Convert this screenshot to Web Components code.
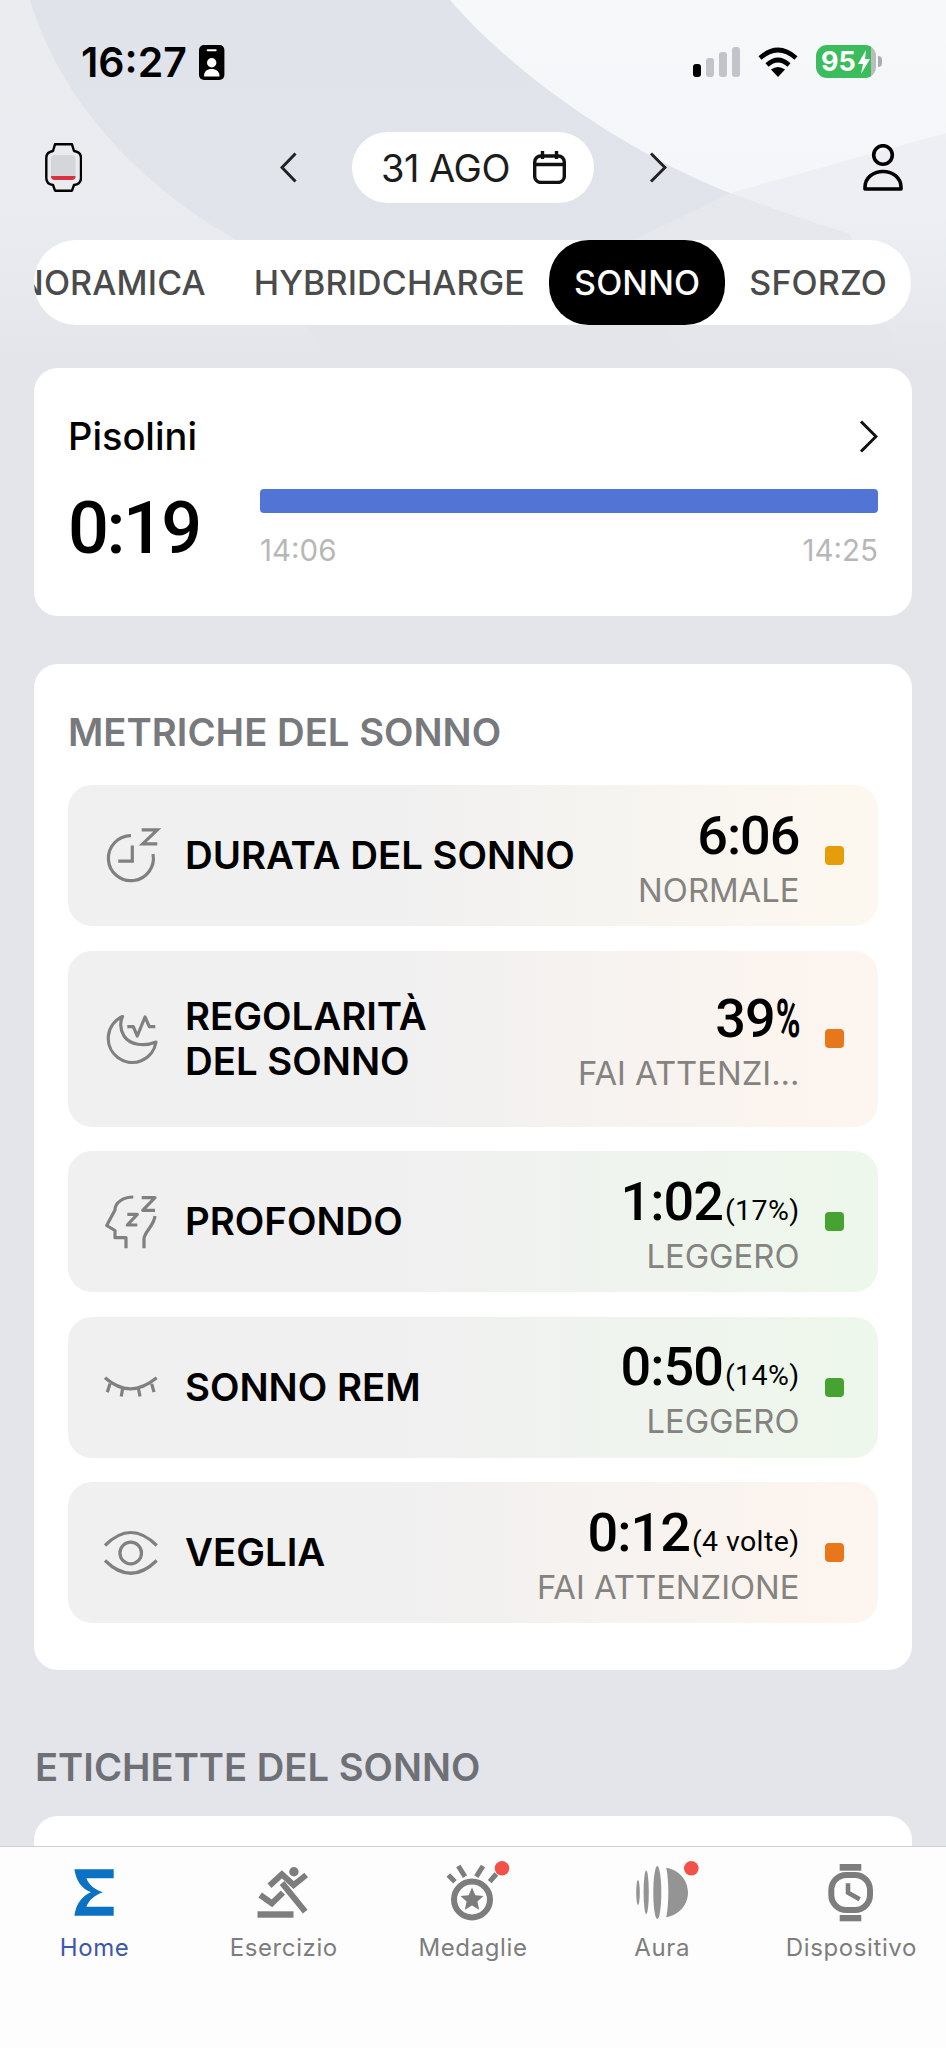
<!DOCTYPE html>
<html lang="it">
<head>
<meta charset="utf-8">
<title>Sonno</title>
<style>
  html, body { margin: 0; padding: 0; background: #e3e5ea; }
  body { font-family: Inter, "Liberation Sans", sans-serif; }
</style>
</head>
<body>
<app-shell>
  <status-bar></status-bar>
  <top-nav date="31 AGO"></top-nav>
  <tab-strip>
    <tab-item>PANORAMICA</tab-item>
    <tab-item>HYBRIDCHARGE</tab-item>
    <tab-item active>SONNO</tab-item>
    <tab-item>SFORZO</tab-item>
  </tab-strip>
  <nap-card title="Pisolini" total="0:19" start="14:06" end="14:25"></nap-card>
  <metrics-card heading="METRICHE DEL SONNO">
    <metric-row icon="clock" level="normal" value="6:06" note="NORMALE">DURATA DEL SONNO</metric-row>
    <metric-row icon="moon" level="warn" value="39%" note="FAI ATTENZI..." tall>REGOLARITÀ<br>DEL SONNO</metric-row>
    <metric-row icon="head" level="good" value="1:02" extra="(17%)" note="LEGGERO">PROFONDO</metric-row>
    <metric-row icon="lash" level="good" value="0:50" extra="(14%)" note="LEGGERO">SONNO REM</metric-row>
    <metric-row icon="eye" level="warn" value="0:12" extra="(4 volte)" note="FAI ATTENZIONE">VEGLIA</metric-row>
  </metrics-card>
  <section-title>ETICHETTE DEL SONNO</section-title>
  <blank-card></blank-card>
  <bottom-nav>
    <nav-item icon="sigma" active>Home</nav-item>
    <nav-item icon="runner">Esercizio</nav-item>
    <nav-item icon="medal">Medaglie</nav-item>
    <nav-item icon="aura">Aura</nav-item>
    <nav-item icon="watch">Dispositivo</nav-item>
  </bottom-nav>
</app-shell>

<script>
const ICONS = {
  clock: `<svg width="60" height="60" viewBox="0 0 60 60" fill="none" stroke="#808080" stroke-width="3.2">
    <path d="M31 9.7A22.5 22.5 0 1 0 53 28"/><path d="M32.3 19.5V35.2H18.3"/>
    <path d="M41.7 3.8H57.3L42.7 17.8H57.3"/></svg>`,
  moon: `<svg width="60" height="60" viewBox="0 0 60 60" fill="none" stroke="#808080" stroke-width="3.2" stroke-linejoin="round">
    <path d="M22.5 7.5A24 24 0 1 0 56 33C44 38 30 36 24 27C20 20 20 13 22.5 7.5Z"/>
    <path d="M27.3 17.7H33.3L37.3 27L45 8L49.3 17.7H55.3"/></svg>`,
  head: `<svg width="60" height="60" viewBox="0 0 60 60" fill="none" stroke="#808080" stroke-width="3.2" stroke-linejoin="round">
    <path d="M33.3 5C24 5 15 10 15 18L6.7 33.5L15 38.5V45.7H26V56.3"/>
    <path d="M55 24C54 34 44 40 44 47V56.3"/>
    <path d="M41.7 5.7H55L42.7 18.3H55"/><path d="M27.3 22.3H37.3L27.3 33H37.3"/></svg>`,
  lash: `<svg width="60" height="60" viewBox="0 0 60 60" fill="none" stroke="#808080" stroke-width="3.2">
    <path d="M5 20.8Q30 42.8 56.7 20.8"/>
    <path d="M10 26.8L7.3 35.2M22.7 30.8L21.3 39.5M38.3 30.8L40 39.5M51.7 26.8L54 35.2"/></svg>`,
  eye: `<svg width="60" height="60" viewBox="0 0 60 60" fill="none" stroke="#808080" stroke-width="3.2">
    <path d="M5 22.5Q30.8 -3.5 56.7 22.5"/><path d="M5 37.5Q30.8 63 56.7 37.5"/>
    <circle cx="30.7" cy="30" r="10.8"/></svg>`,
  sigma: `<svg width="70" height="60" viewBox="0 0 70 60">
    <path fill="#0a72c4" d="M14.4 5.3H53.7V14.3H26.4C29 21 35 26 43 28.3C35 31 29 36 26.4 42.7H53.7V51.7H14.4C16 40 22 32 31 28.3C22 25 16 17 14.4 5.3Z"/></svg>`,
  runner: `<svg width="70" height="60" viewBox="0 0 70 60" fill="none" stroke="#7d7d7d" stroke-width="6">
    <rect x="8.5" y="47.3" width="36" height="6.4" fill="#7d7d7d" stroke="none"/>
    <circle cx="44.9" cy="7.7" r="4.7" fill="#7d7d7d" stroke="none"/>
    <path d="M20.5 21.7L32.9 10.3L44.6 21L57.2 11"/>
    <path d="M33 19L56.2 47.7"/>
    <path d="M11.2 31L22.9 39.3L33.9 28.7"/></svg>`,
  medal: `<svg width="70" height="60" viewBox="0 0 70 60" fill="none" stroke="#7d7d7d" stroke-width="5">
    <circle cx="34" cy="35.5" r="18" stroke-width="6"/>
    <path d="M34 23.5L37.4 31.2L45.6 32L39.4 37.6L41.2 45.8L34 41.5L26.8 45.8L28.6 37.6L22.4 32L30.6 31.2Z" fill="#7d7d7d" stroke="none"/>
    <path d="M10.3 11L17 17.7M20.3 2L27 12.7M45 2L38.3 12.7M58.3 10L51.7 17.7"/>
    <circle cx="64" cy="4.3" r="7.3" fill="#f4504a" stroke="none"/></svg>`,
  aura: `<svg width="70" height="60" viewBox="0 0 70 60" fill="#949494">
    <ellipse cx="11" cy="28.5" rx="1.8" ry="12.5"/><ellipse cx="19.2" cy="28.3" rx="2.6" ry="21.7"/>
    <ellipse cx="30.3" cy="28.5" rx="4" ry="26.5"/>
    <path d="M39.3 3.7C52 6 61 16 61 28.5C61 41 52 51 39.3 53.3C42 40 42 17 39.3 3.7Z"/>
    <circle cx="64.3" cy="4.3" r="7.3" fill="#f4504a"/></svg>`,
  watch: `<svg width="70" height="60" viewBox="0 0 70 60" fill="none" stroke="#7d7d7d" stroke-width="6">
    <rect x="23.7" y="0" width="21.6" height="6.7" fill="#7d7d7d" stroke="none"/>
    <rect x="23.7" y="51" width="21.6" height="6.3" fill="#7d7d7d" stroke="none"/>
    <rect x="15.3" y="11" width="38.7" height="35" rx="15"/>
    <path d="M32 19.3V28.7L43.7 35.3" stroke-width="4.6"/></svg>`
};

class AppIcon extends HTMLElement {
  connectedCallback() {
    this.attachShadow({ mode: "open" }).innerHTML = `
      <style>
        :host { display: block; line-height: 0; flex: none; }
        svg { overflow: visible; }
      </style>
      ${ICONS[this.getAttribute("name")]}`;
  }
}

class AppShell extends HTMLElement {
  constructor() {
    super();
    this.attachShadow({ mode: "open" }).innerHTML = `
      <style>
        :host {
          display: block;
          position: relative;
          width: 946px;
          height: 2048px;
          overflow: hidden;
          background: #e3e5ea;
          color: #000;
          font-family: Inter, "Liberation Sans", sans-serif;
        }
        .backdrop { position: absolute; left: 0; top: 0; }
        .content { position: relative; height: 100%; }
      </style>
      <svg class="backdrop" width="946" height="360" viewBox="0 0 946 360">
        <defs>
          <linearGradient id="fade" x1="0" y1="0" x2="0" y2="1">
            <stop offset="0" stop-color="#e4e7ed" stop-opacity="0"/>
            <stop offset=".6" stop-color="#e4e7ed" stop-opacity=".15"/>
            <stop offset="1" stop-color="#e3e5ea"/>
          </linearGradient>
        </defs>
        <rect width="946" height="360" fill="#e0e3ea"/>
        <path d="M0 0H30C60 100 140 190 255 250L330 360H0Z" fill="#eaecf0"/>
        <path d="M450 0C510 70 620 150 730 193C790 215 860 240 946 270V0Z" fill="#f7f8fa"/>
        <path d="M730 193L946 133V360H900L850 234C805 219 765 206 730 193Z" fill="#eef0f4"/>
        <path d="M730 193L634 240L680 360H900L850 234C805 219 765 206 730 193Z" fill="#e6e8ec"/>
        <rect width="946" height="360" fill="url(#fade)"/>
      </svg>
      <div class="content"><slot></slot></div>`;
  }
}

class StatusBar extends HTMLElement {
  constructor() {
    super();
    this.attachShadow({ mode: "open" }).innerHTML = `
      <style>
        :host {
          display: flex;
          height: 126px;
          padding: 45px 64px 0 81px;
          box-sizing: border-box;
          justify-content: space-between;
          align-items: flex-start;
        }
        .left { display: flex; align-items: center; gap: 12px; height: 35px; }
        .time { font-size: 41px; font-weight: 600; line-height: 35px; }
        .right { display: flex; align-items: center; gap: 18px; height: 33px; }
        .battery {
          width: 60px; height: 33px; border-radius: 11px; box-sizing: border-box;
          background: linear-gradient(to right, #3bbd5e 92%, #b9bdc0 92%);
          color: #fff; font-size: 27px; font-weight: 700; line-height: 33px;
          display: flex; align-items: center; padding-left: 5px; gap: 1px;
        }
        .tip { width: 4px; height: 11px; background: #a9adb1; border-radius: 0 4px 4px 0; margin-left: 2px; }
        .bat-wrap { display: flex; align-items: center; }
      </style>
      <div class="left">
        <span class="time">16:27</span>
        <svg width="26" height="35" viewBox="0 0 26 35">
          <rect width="25.4" height="35" rx="5" fill="#000"/>
          <rect x="7.7" y="4.2" width="10" height="2" rx="1" fill="#fff"/>
          <circle cx="12.7" cy="17.7" r="4.7" fill="#fff"/>
          <path d="M5 31.5C5 26 8 24 12.7 24C17 24 20.5 26 20.5 31.5Z" fill="#fff"/>
        </svg>
      </div>
      <div class="right">
        <svg width="47" height="32" viewBox="0 0 47 32">
          <rect x="0" y="18" width="8" height="13" rx="3" fill="#000"/>
          <rect x="13" y="12" width="8" height="19" rx="3" fill="#c2c4ca"/>
          <rect x="26" y="6" width="8" height="25" rx="3" fill="#c2c4ca"/>
          <rect x="39" y="1" width="8" height="30" rx="3" fill="#c2c4ca"/>
        </svg>
        <svg width="40" height="30" viewBox="0 0 40 30" fill="none" stroke="#000" stroke-width="4.6">
          <path d="M2 11Q20 -5 38 11"/><path d="M9 18Q20 8 31 18"/>
          <path d="M13 22.5Q20 17.5 27 22.5L20 30Z" fill="#000" stroke="none"/>
        </svg>
        <div class="bat-wrap">
          <div class="battery">95<svg width="14" height="26" viewBox="0 0 14 26"><path d="M9 1L1 15H6L4 25L13 10H8Z" fill="#fff"/></svg></div>
          <div class="tip"></div>
        </div>
      </div>`;
  }
}

class TopNav extends HTMLElement {
  connectedCallback() {
    this.attachShadow({ mode: "open" }).innerHTML = `
      <style>
        :host {
          display: flex;
          align-items: center;
          height: 71px;
          margin-top: 6px;
          padding-left: 45px;
        }
        .pill {
          width: 242px; height: 71px; border-radius: 36px; background: #fff;
          display: flex; align-items: center; box-sizing: border-box; padding-left: 29px; gap: 23px;
          font-size: 38px; font-weight: 400; color: #1c1c1c; letter-spacing: -.5px;
        }
        .pill span { white-space: nowrap; }
        svg { flex: none; }
      </style>
      <svg style="margin-right:198px" width="37" height="49" viewBox="0 0 37 49" fill="none">
        <rect x="6" y="12" width="24.5" height="25" rx="4" fill="#d5d6d9"/>
        <path d="M6 33H30.5V33.5C30.5 35.5 29 37 27 37H9.5C7.5 37 6 35.5 6 33.5Z" fill="#d9333f"/>
        <path d="M10 1.3H27L29 8C33 8.5 36 11 36 15V35C36 39 33 41.5 29 42L27 47.7H10L8 42C4 41.5 1.3 39 1.3 35V15C1.3 11 4 8.5 8 8Z" stroke="#000" stroke-width="2.4" stroke-linejoin="round"/>
      </svg>
      <svg style="margin-right:55px" width="17" height="31" viewBox="0 0 17 31" fill="none" stroke="#222" stroke-width="3">
        <path d="M15.5 1.5L2 15.5L15.5 29.5"/></svg>
      <div class="pill"><span>${this.getAttribute("date")}</span>
        <svg width="33" height="33" viewBox="0 0 33 33" fill="none" stroke="#111" stroke-width="3.4">
          <rect x="1.7" y="5" width="29.6" height="26.4" rx="6"/>
          <path d="M1.6 13.5H31.4M9.5 0V8M23.5 0V8"/></svg>
      </div>
      <svg style="margin:0 196px 0 55px" width="18" height="31" viewBox="0 0 18 31" fill="none" stroke="#222" stroke-width="3">
        <path d="M2 1.5L16 15.5L2 29.5"/></svg>
      <svg width="40" height="47" viewBox="0 0 40 47" fill="none" stroke="#000" stroke-width="3.6" stroke-linejoin="round">
        <circle cx="20" cy="11" r="9.3"/>
        <path d="M2 45V43C2 34 10 27.5 20 27.5C30 27.5 38 34 38 43V45Z"/></svg>`;
  }
}

class TabStrip extends HTMLElement {
  constructor() {
    super();
    this.attachShadow({ mode: "open" }).innerHTML = `
      <style>
        :host {
          display: flex;
          justify-content: flex-end;
          height: 85px;
          margin: 37px 35px 0 34px;
          background: #fff;
          border-radius: 42px;
          overflow: hidden;
        }
      </style>
      <slot></slot>`;
  }
}

class TabItem extends HTMLElement {
  constructor() {
    super();
    this.attachShadow({ mode: "open" }).innerHTML = `
      <style>
        :host {
          display: flex;
          flex: none;
          align-items: center;
          padding: 0 24px;
          border-radius: 40px;
          font-size: 34px;
          font-weight: 500;
          letter-spacing: .15px;
          color: #4b4b4b;
          white-space: nowrap;
        }
        :host([active]) { padding: 0 25px; background: #000; color: #fff; }
      </style>
      <slot></slot>`;
  }
}

class NapCard extends HTMLElement {
  connectedCallback() {
    const a = (n) => this.getAttribute(n);
    this.attachShadow({ mode: "open" }).innerHTML = `
      <style>
        :host {
          display: block;
          height: 248px;
          margin: 43px 34px 0;
          padding: 43px 34px 0;
          box-sizing: border-box;
          background: #fff;
          border-radius: 24px;
        }
        .head { display: flex; justify-content: space-between; align-items: center; height: 50px; }
        .title { font-size: 38px; font-weight: 500; line-height: 50px; }
        .body { display: flex; gap: 62px; margin-top: 25px; }
        .total { font-family: Roboto, sans-serif; font-size: 72px; font-weight: 500; width: 130px; letter-spacing: -2.5px; line-height: 72px; margin-top: 7px; white-space: nowrap; }
        .track { flex: 1; padding-top: 3px; }
        .bar { height: 24px; border-radius: 4px; background: #5274d4; }
        .times { display: flex; justify-content: space-between; margin-top: 19px; font-size: 29.5px; line-height: 36px; color: #b7b7b7; }
      </style>
      <div class="head">
        <span class="title">${a("title")}</span>
        <svg width="19" height="33" viewBox="0 0 19 33" fill="none" stroke="#111" stroke-width="3"><path d="M2 1.5L17 16.5L2 31.5"/></svg>
      </div>
      <div class="body">
        <span class="total">${a("total")}</span>
        <div class="track">
          <div class="bar"></div>
          <div class="times"><span>${a("start")}</span><span>${a("end")}</span></div>
        </div>
      </div>`;
  }
}

class MetricsCard extends HTMLElement {
  connectedCallback() {
    this.attachShadow({ mode: "open" }).innerHTML = `
      <style>
        :host {
          display: flex;
          flex-direction: column;
          gap: 24.5px;
          margin: 48px 34px 0;
          padding: 43px 34px 47px;
          background: #fff;
          border-radius: 24px;
        }
        h2 { margin: 0 0 3.5px; font-size: 38.3px; font-weight: 600; line-height: 50px; color: #77797d; }
      </style>
      <h2>${this.getAttribute("heading")}</h2>
      <slot></slot>`;
  }
}

const TINTS = {
  normal: ["#fcf8f0", "#e59e0a"],
  warn: ["#fdf5ef", "#e8761a"],
  good: ["#eef7ec", "#46a332"]
};

class MetricRow extends HTMLElement {
  connectedCallback() {
    const a = (n) => this.getAttribute(n);
    const [tint, dot] = TINTS[a("level")];
    const extra = a("extra") ? `<small>${a("extra")}</small>` : "";
    // the % sign is much narrower in the app's number font
    const value = a("value").replace("%", `<i>%</i>`);
    this.attachShadow({ mode: "open" }).innerHTML = `
      <style>
        :host {
          display: flex;
          align-items: center;
          height: ${this.hasAttribute("tall") ? 176 : 141}px;
          padding: 0 34px 0 32px;
          box-sizing: border-box;
          border-radius: 24px;
          background: linear-gradient(to right, #f0f0f0 40%, ${tint} 95%);
        }
        .label { flex: 1; margin-left: 25px; font-size: 38.4px; font-weight: 600; line-height: 45px; white-space: nowrap; }
        .nums { display: flex; flex-direction: column; align-items: flex-end; padding-top: 14px; }
        .value { display: flex; align-items: baseline; height: 54px; font-family: Roboto, sans-serif; font-size: 54px; font-weight: 500; line-height: 54px; letter-spacing: -1px; white-space: nowrap; }
        .value i { font-style: normal; font-weight: 700; display: inline-block; transform: scaleX(.62); transform-origin: right; margin-left: -14px; }
        small { font-family: Roboto, sans-serif; font-size: 28.5px; font-weight: 400; line-height: 28px; letter-spacing: .4px; margin-left: 2px; }
        .note { font-size: 32.8px; line-height: 54px; color: #85837f; white-space: nowrap; }
        .dot { flex: none; width: 19px; height: 19px; border-radius: 4px; background: ${dot}; margin-left: 25.5px; }
      </style>
      <app-icon name="${a("icon")}"></app-icon>
      <div class="label"><slot></slot></div>
      <div class="nums">
        <div class="value"><span>${value}</span>${extra}</div>
        <div class="note">${a("note")}</div>
      </div>
      <div class="dot"></div>`;
  }
}

class SectionTitle extends HTMLElement {
  constructor() {
    super();
    this.attachShadow({ mode: "open" }).innerHTML = `
      <style>
        :host {
          display: block;
          margin: 72px 34px 0 35px;
          font-size: 38.2px;
          font-weight: 600;
          line-height: 50px;
          color: #6e7076;
        }
      </style>
      <slot></slot>`;
  }
}

class BlankCard extends HTMLElement {
  constructor() {
    super();
    this.attachShadow({ mode: "open" }).innerHTML = `
      <style>
        :host {
          display: block;
          height: 200px;
          margin: 24px 34px 0;
          background: #fff;
          border-radius: 24px;
        }
      </style>`;
  }
}

class BottomNav extends HTMLElement {
  constructor() {
    super();
    this.attachShadow({ mode: "open" }).innerHTML = `
      <style>
        :host {
          position: absolute;
          left: 0;
          right: 0;
          bottom: 0;
          height: 202px;
          box-sizing: border-box;
          display: grid;
          grid-template-columns: repeat(5, 1fr);
          align-items: start;
          padding-top: 17px;
          background: #fdfdfd;
          border-top: 1px solid #cfcfcf;
        }
      </style>
      <slot></slot>`;
  }
}

class NavItem extends HTMLElement {
  connectedCallback() {
    this.attachShadow({ mode: "open" }).innerHTML = `
      <style>
        :host {
          display: flex;
          flex-direction: column;
          align-items: center;
          gap: 6px;
          font-size: 24px;
          line-height: 36px;
          letter-spacing: .6px;
          color: #7d7d7d;
        }
        :host([active]) { color: #3f57a8; }
      </style>
      <app-icon name="${this.getAttribute("icon")}"></app-icon>
      <span><slot></slot></span>`;
  }
}

customElements.define("app-icon", AppIcon);
customElements.define("app-shell", AppShell);
customElements.define("status-bar", StatusBar);
customElements.define("top-nav", TopNav);
customElements.define("tab-strip", TabStrip);
customElements.define("tab-item", TabItem);
customElements.define("nap-card", NapCard);
customElements.define("metrics-card", MetricsCard);
customElements.define("metric-row", MetricRow);
customElements.define("section-title", SectionTitle);
customElements.define("blank-card", BlankCard);
customElements.define("bottom-nav", BottomNav);
customElements.define("nav-item", NavItem);
</script>
</body>
</html>
